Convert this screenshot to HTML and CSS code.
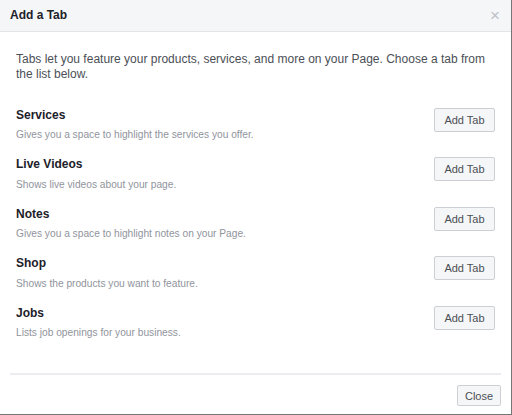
FILE: index.html
```html
<!DOCTYPE html>
<html>
<head>
<meta charset="utf-8">
<link rel="stylesheet" href="styles.css">
</head>
<body>
<div class="dialog">
  <div class="header">
    <span class="title">Add a Tab</span>
    <span class="close-x">&times;</span>
  </div>
  <div class="body">
    <p class="intro">Tabs let you feature your products, services, and more on your Page. Choose a tab from the list below.</p>
    <div class="list">
      <div class="row">
        <div class="info">
          <div class="name">Services</div>
          <div class="desc">Gives you a space to highlight the services you offer.</div>
        </div>
        <button class="btn">Add Tab</button>
      </div>
      <div class="row">
        <div class="info">
          <div class="name">Live Videos</div>
          <div class="desc">Shows live videos about your page.</div>
        </div>
        <button class="btn">Add Tab</button>
      </div>
      <div class="row">
        <div class="info">
          <div class="name">Notes</div>
          <div class="desc">Gives you a space to highlight notes on your Page.</div>
        </div>
        <button class="btn">Add Tab</button>
      </div>
      <div class="row">
        <div class="info">
          <div class="name">Shop</div>
          <div class="desc">Shows the products you want to feature.</div>
        </div>
        <button class="btn">Add Tab</button>
      </div>
      <div class="row">
        <div class="info">
          <div class="name">Jobs</div>
          <div class="desc">Lists job openings for your business.</div>
        </div>
        <button class="btn">Add Tab</button>
      </div>
    </div>
  </div>
  <div class="footer">
    <button class="btn btn-close">Close</button>
  </div>
</div>
</body>
</html>
```
FILE: styles.css
```css
* { box-sizing: border-box; }
html, body { margin: 0; padding: 0; background: #fff; }
body { font-family: "Liberation Sans", Arial, sans-serif; }
.dialog {
  width: 512px;
  height: 415px;
  border-right: 1px solid #767676;
  border-bottom: 1px solid #767676;
  display: flex;
  flex-direction: column;
  background: #fff;
}
.header {
  height: 32px;
  background: #f5f6f7;
  border-bottom: 1px solid #e5e5e5;
  display: flex;
  align-items: center;
  justify-content: space-between;
  padding: 0 11px 1px 10px;
}
.title {
  font-size: 12px;
  font-weight: bold;
  color: #1d2129;
}
.close-x {
  font-size: 17px;
  line-height: 16px;
  color: #bec2c9;
  margin-top: 2px;
}
.body {
  padding: 20px 16px 0 16px;
}
.intro {
  margin: 0;
  font-size: 12px;
  line-height: 15px;
  color: #4b4f56;
}
.list {
  margin-top: 24.5px;
  display: flex;
  flex-direction: column;
  gap: 14px;
}
.row {
  display: flex;
  justify-content: space-between;
  align-items: flex-start;
}
.name {
  font-size: 12px;
  line-height: 16px;
  font-weight: bold;
  color: #1d2129;
}
.desc {
  margin-top: 5.5px;
  font-size: 10.2px;
  line-height: 14px;
  color: #90949c;
}
.btn {
  margin-top: 1px;
  height: 24px;
  width: 61px;
  padding: 0;
  font-family: "Liberation Sans", Arial, sans-serif;
  font-size: 11px;
  color: #4b4f56;
  background: #f5f6f7;
  border: 1px solid #ccd0d5;
  border-radius: 2px;
}
.footer {
  margin: auto 10px 0 10px;
  border-top: 2px solid #ebedf0;
  padding: 10px 0 8px 0;
  display: flex;
  justify-content: flex-end;
}
.btn-close {
  margin-top: 0;
  width: 44px;
  height: 21px;
}
```
